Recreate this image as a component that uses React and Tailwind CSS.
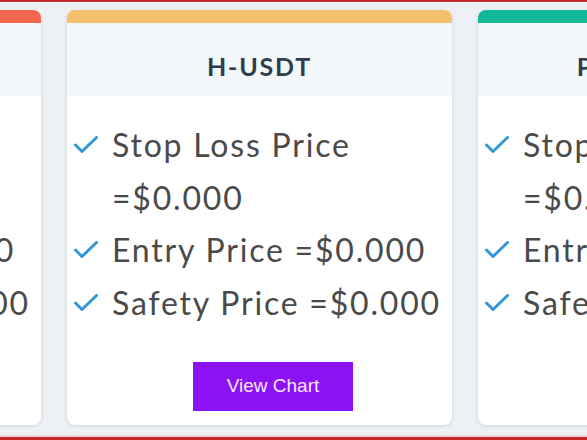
import React from 'react'

const cards = [
  { title: 'BTC-USDT', bar: 'bg-[#f3674f]' },
  { title: 'H-USDT', bar: 'bg-[#f4c06b]', button: true },
  { title: 'PEOPLE-USDT', bar: 'bg-[#13b89b]' },
]

const rows = ['Stop Loss Price =$0.000', 'Entry Price =$0.000', 'Safety Price =$0.000']

function Tick() {
  return (
    <svg width="24" height="18" viewBox="0 0 24 18" className="shrink-0">
      <polyline points="1.5,9 8,15.5 22.5,1.5" fill="none" stroke="#3399d6" strokeWidth="3" strokeLinecap="round" strokeLinejoin="round" />
    </svg>
  )
}

function PriceCard({ title, bar, button }) {
  return (
    <div className="w-[385px] h-[415px] shrink-0 flex flex-col rounded-lg overflow-hidden bg-white shadow-[0_1px_4px_rgba(0,0,0,0.12)]">
      <div className={`h-[13px] ${bar}`} />
      <div className="h-[73px] bg-[#f4f7fa] pt-[28px] text-center">
        <h3 className="text-[25px] leading-[30px] font-bold tracking-[1.8px] text-[#2c3e50] whitespace-nowrap">{title}</h3>
      </div>
      <div className="flex-1 flex flex-col pt-[23px]">
        <ul className="pr-2">
          {rows.map((r) => (
            <li key={r} className="flex items-start">
              <div className="w-[45px] h-[52px] pl-[7px] shrink-0 flex items-center">
                <Tick />
              </div>
              <span className="text-[32px] leading-[52.5px] tracking-[1.8px] text-[#4a4a4a]">{r}</span>
            </li>
          ))}
        </ul>
        {button && (
          <button
            type="button"
            className="mt-[33px] ml-[126px] w-[160px] h-[49px] bg-[#8c11f5] text-[#f7e6ff] text-[19px] font-['Liberation_Sans',Arial,sans-serif]"
          >
            View Chart
          </button>
        )}
      </div>
    </div>
  )
}

export default function App() {
  return (
    <div className="w-[587px] h-[440px] overflow-hidden border-t-2 border-b-[3px] border-[#c62828] font-['Lato',sans-serif]">
      <div className="h-full bg-[#edf1f5] border-t border-white border-b-2 border-b-[#f7d6d6]">
        <div className="flex gap-[26px] ml-[-344px] pt-[7px]">
          {cards.map((c) => (
            <PriceCard key={c.title} {...c} />
          ))}
        </div>
      </div>
    </div>
  )
}
